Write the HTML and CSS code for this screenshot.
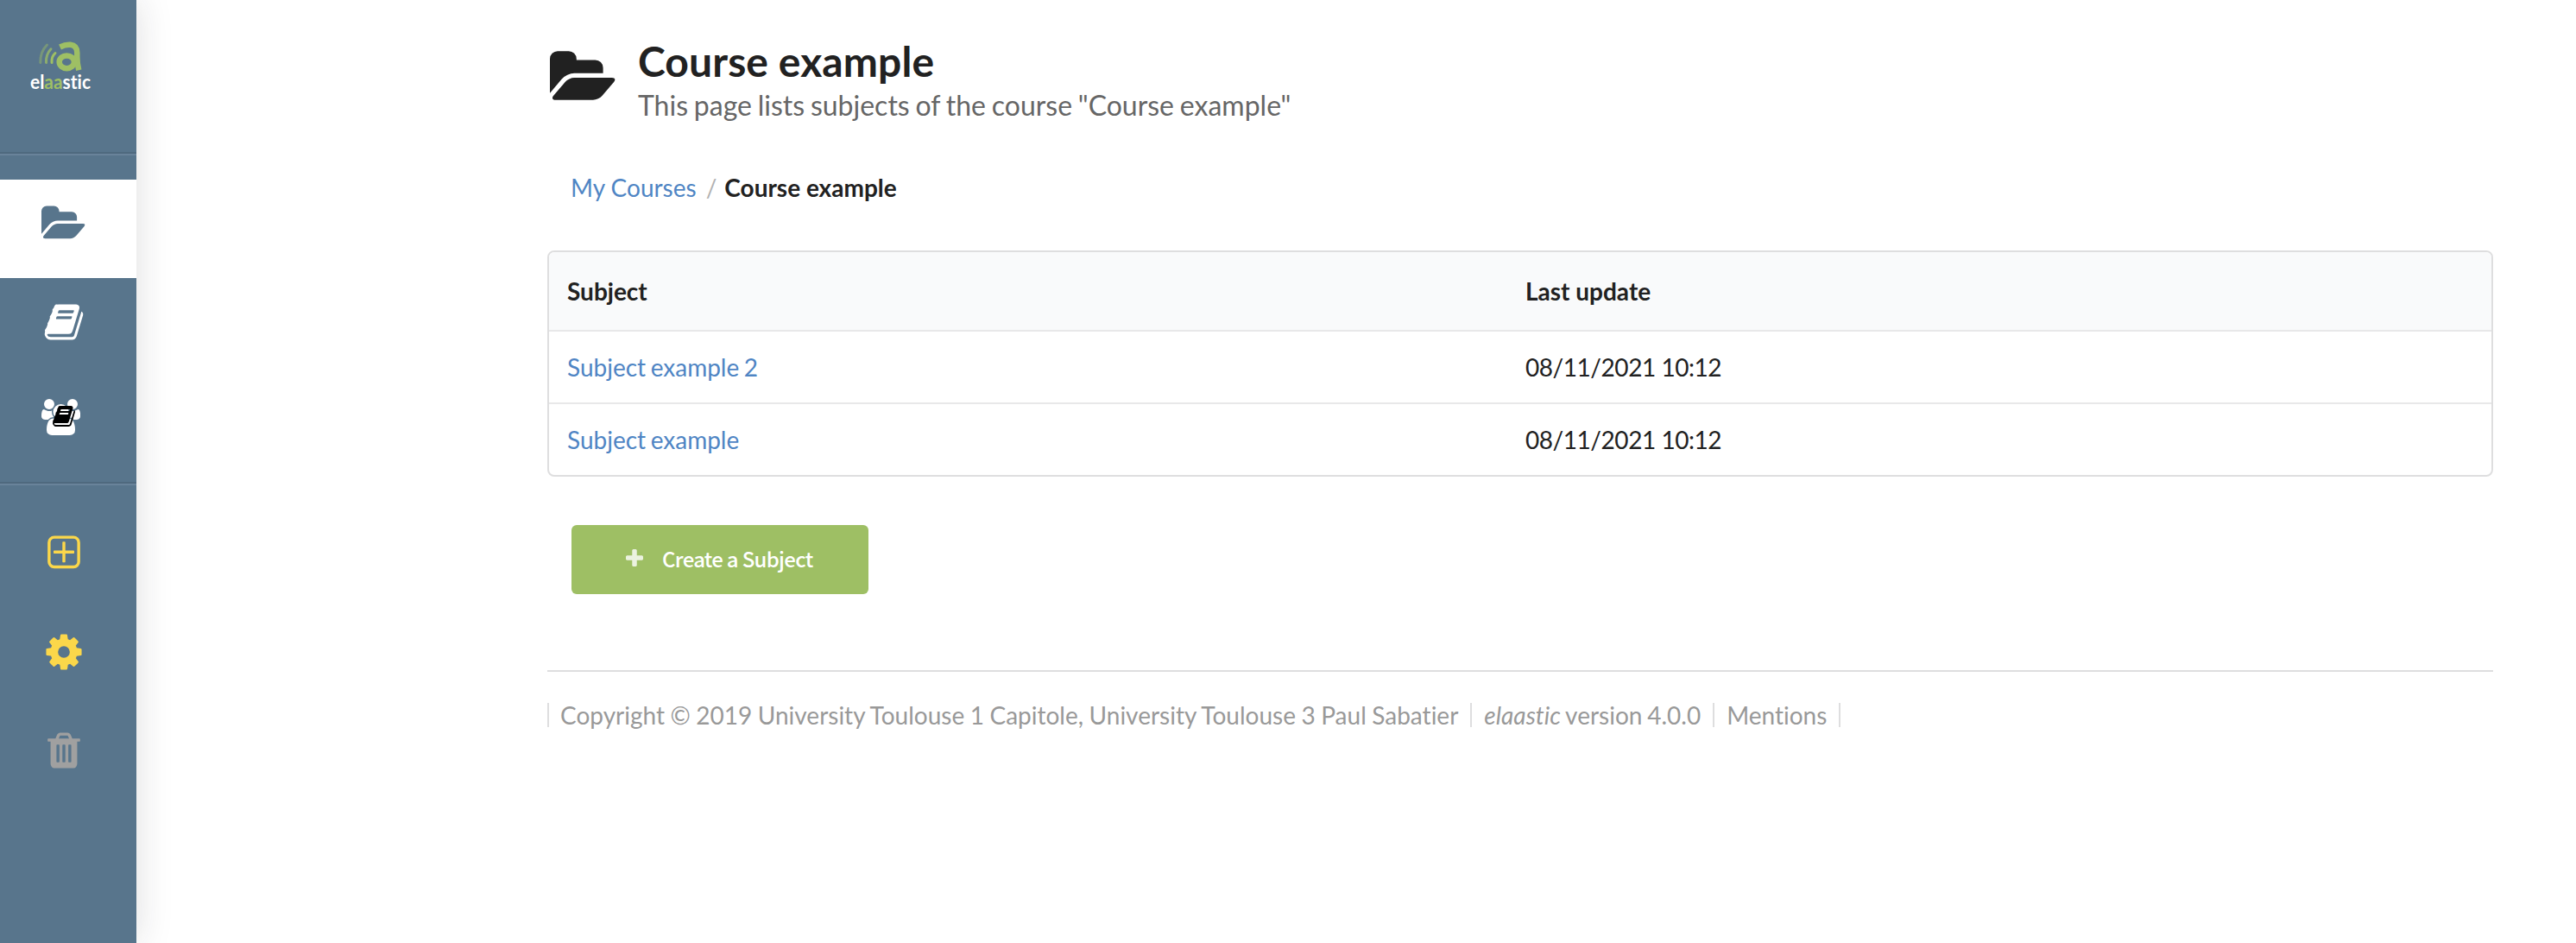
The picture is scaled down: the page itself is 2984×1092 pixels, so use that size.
FILE: index.html
```html
<!DOCTYPE html>
<html lang="en">
<head>
<meta charset="utf-8">
<title>Course example - elaastic</title>
<link rel="stylesheet" href="styles.css">
</head>
<body>
<svg class="symbols" aria-hidden="true">
  <symbol id="folder" viewBox="0 0 1920 1792"><path d="M1879 952q0 31-31 66l-336 396q-43 51-120.500 86.500t-143.500 35.500h-1088q-34 0-60.500-13t-26.500-43q0-31 31-66l336-396q43-51 120.500-86.500t143.500-35.500h1088q34 0 60.500 13t26.500 43zm-343-344v160h-832q-94 0-197 47.500t-164 119.500l-337 396-5 6q0-4-.5-12.500t-.5-12.500v-960q0-92 66-158t158-66h320q92 0 158 66t66 158v32h544q92 0 158 66t66 158z"/></symbol>
  <symbol id="book" viewBox="0 0 1792 1792"><path d="M1703 478q40 57 18 129l-275 906q-19 64-76.500 107.500t-122.500 43.500h-923q-77 0-148.500-53.500t-99.500-131.500q-24-67-2-127 0-4 3-27t4-37q1-8-3-21.500t-3-19.500q2-11 8-21t16.500-23.500 16.500-23.500q23-38 45-91.500t30-91.500q3-10 .5-30t-.5-28q3-11 17-28t17-23q21-36 42-92t25-90q1-9-2.500-32t.5-28q4-13 22-30.500t22-22.500q19-26 42.500-84.500t27.500-96.500q1-8-3-25.500t-2-26.500q2-8 9-18t18-23 17-21q8-12 16.500-30.500t15-35 16-36 19.500-32 26.500-23.500 36-11.500 47.500 5.500l-1 3q38-9 51-9h761q74 0 114 56t18 130l-274 906q-36 119-71.500 153.500t-128.500 34.500h-869q-27 0-38 15-11 16-1 43 24 70 144 70h923q29 0 56-15.500t35-41.500l300-987q7-22 5-57 38 15 59 43zm-1064 2q-4 13 2 22.500t20 9.500h608q13 0 25.500-9.500t16.500-22.500l21-64q4-13-2-22.500t-20-9.500h-608q-13 0-25.500 9.500t-16.500 22.500zm-83 256q-4 13 2 22.500t20 9.500h608q13 0 25.500-9.500t16.500-22.500l21-64q4-13-2-22.500t-20-9.500h-608q-13 0-25.500 9.500t-16.500 22.500z"/></symbol>
  <symbol id="users" viewBox="64 0 1920 1792"><path d="M657 896q-162 5-265 128h-134q-82 0-138-40.500t-56-118.500q0-353 124-353 6 0 43.500 21t97.500 42.500 119 21.500q67 0 133-23-5 37-5 66 0 159 90 256zm1071 637q0 120-73 189.500t-194 69.500h-874q-121 0-194-69.500t-73-189.500q0-53 3.500-103.500t14-109 26.500-108.500 43-97.500 62-81 85.500-53.500 111.500-20q10 0 43 21.500t73 48 107 48 135 21.500 135-21.500 107-48 73-48 43-21.500q61 0 111.500 20t85.500 53.500 62 81 43 97.500 26.500 108.500 14 109 3.500 103.500zm-1024-1277q0 106-75 181t-181 75-181-75-75-181 75-181 181-75 181 75 75 181zm704 384q0 159-112.500 271.500t-271.500 112.500-271.500-112.500-112.500-271.500 112.500-271.500 271.500-112.500 271.500 112.500 112.500 271.500zm576 225q0 78-56 118.500t-138 40.500h-134q-103-123-265-128 90-97 90-256 0-29-5-66 66 23 133 23 59 0 119-21.500t97.500-42.500 43.500-21q124 0 124 353zm-128-609q0 106-75 181t-181 75-181-75-75-181 75-181 181-75 181 75 75 181z"/></symbol>
  <symbol id="add" viewBox="0 0 1792 1792"><path d="M1344 800v64q0 14-9 23t-23 9h-352v352q0 14-9 23t-23 9h-64q-14 0-23-9t-9-23v-352h-352q-14 0-23-9t-9-23v-64q0-14 9-23t23-9h352v-352q0-14 9-23t23-9h64q14 0 23 9t9 23v352h352q14 0 23 9t9 23zm128 448v-832q0-66-47-113t-113-47h-832q-66 0-113 47t-47 113v832q0 66 47 113t113 47h832q66 0 113-47t47-113zm128-832v832q0 119-84.500 203.500t-203.500 84.500h-832q-119 0-203.500-84.500t-84.500-203.500v-832q0-119 84.500-203.500t203.500-84.500h832q119 0 203.500 84.500t84.500 203.500z"/></symbol>
  <symbol id="cog" viewBox="0 0 1792 1792"><path d="M1152 896q0-106-75-181t-181-75-181 75-75 181 75 181 181 75 181-75 75-181zm512-109v222q0 12-8 23t-20 13l-185 28q-19 54-39 91 35 50 107 138 10 12 10 25t-9 23q-27 37-99 108t-94 71q-12 0-26-9l-138-108q-44 23-91 38-16 136-29 186-7 28-36 28h-222q-14 0-24.500-8.500t-11.500-21.500l-28-184q-49-16-90-37l-141 107q-10 9-25 9-14 0-25-11-126-114-165-168-7-10-7-23 0-12 8-23 15-21 51-66.500t54-70.500q-27-50-41-99l-183-27q-13-2-21-12.500t-8-23.500v-222q0-12 8-23t19-13l186-28q14-46 39-92-40-57-107-138-10-12-10-24 0-10 9-23 26-36 98.500-107.500t94.500-71.500q13 0 26 10l138 107q44-23 91-38 16-136 29-186 7-28 36-28h222q14 0 24.500 8.500t11.500 21.500l28 184q49 16 90 37l142-107q9-9 24-9 13 0 25 10 129 119 165 170 7 8 7 22 0 12-8 23-15 21-51 66.500t-54 70.500q26 50 41 98l183 28q13 2 21 12.500t8 23.500z"/></symbol>
  <symbol id="trash" viewBox="0 0 1792 1792"><path d="M704 1376v-704q0-14-9-23t-23-9h-64q-14 0-23 9t-9 23v704q0 14 9 23t23 9h64q14 0 23-9t9-23zm256 0v-704q0-14-9-23t-23-9h-64q-14 0-23 9t-9 23v704q0 14 9 23t23 9h64q14 0 23-9t9-23zm256 0v-704q0-14-9-23t-23-9h-64q-14 0-23 9t-9 23v704q0 14 9 23t23 9h64q14 0 23-9t9-23zm-544-992h448l-48-117q-7-9-17-11h-317q-10 2-17 11zm928 32v64q0 14-9 23t-23 9h-96v948q0 83-47 143.500t-113 60.500h-832q-66 0-113-58.500t-47-141.500v-952h-96q-14 0-23-9t-9-23v-64q0-14 9-23t23-9h309l70-167q15-37 54-63t79-26h320q40 0 79 26t54 63l70 167h309q14 0 23 9t9 23z"/></symbol>
  <symbol id="plus" viewBox="192 128 1408 1408"><path d="M1600 736v192q0 40-28 68t-68 28h-416v416q0 40-28 68t-68 28h-192q-40 0-68-28t-28-68v-416h-416q-40 0-68-28t-28-68v-192q0-40 28-68t68-28h416v-416q0-40 28-68t68-28h192q40 0 68 28t28 68v416h416q40 0 68 28t28 68z"/></symbol>
</svg>
<div class="layout">
  <nav class="sidebar">
    <a class="brand" aria-label="elaastic">
      <svg class="logo" viewBox="30 40 80 70">
        <g fill="none" stroke="#9ebf64" stroke-linecap="round" stroke-width="3">
          <path opacity=".45" d="M54.500 52Q46.500 60 46.800 72.500"/>
          <path opacity=".75" d="M59 56.800Q53 63 53.500 72.500"/>
          <path d="M64 61.500Q59.500 65.500 60 72.500"/>
          <path stroke-width="6.500" d="M69.500 54.500Q76 51.300 81.500 51.800Q89.300 52.800 89.300 61V66Q89.300 73 91.300 81.300" stroke-linecap="butt"/>
          <ellipse stroke-width="6.500" cx="77.300" cy="71.800" rx="8.600" ry="7.400"/>
        </g>
        <text class="logo-text" x="35" y="102.500" textLength="70" lengthAdjust="spacingAndGlyphs">el<tspan class="logo-accent">aa</tspan>stic</text>
      </svg>
    </a>
    <div class="group main-group">
      <a class="item active"><svg class="icon folder-icon"><use href="#folder"/></svg></a>
      <a class="item"><svg class="icon"><use href="#book"/></svg></a>
      <a class="item stacked">
        <svg class="users-icon"><use href="#users"/></svg>
        <svg class="corner-icon"><use href="#book"/></svg>
      </a>
    </div>
    <div class="group tools-group">
      <a class="item yellow"><svg class="icon"><use href="#add"/></svg></a>
      <a class="item yellow"><svg class="icon"><use href="#cog"/></svg></a>
      <a class="item grey"><svg class="icon"><use href="#trash"/></svg></a>
    </div>
  </nav>
  <main class="content">
    <header class="page-header">
      <svg class="header-icon"><use href="#folder"/></svg>
      <div>
        <h1 class="title">Course example</h1>
        <p class="subtitle">This page lists subjects of the course "Course example"</p>
      </div>
    </header>
    <div class="breadcrumb"><a class="link">My Courses</a><span class="divider">/</span><strong>Course example</strong></div>
    <div class="table">
      <div class="row head"><span>Subject</span><span>Last update</span></div>
      <div class="row"><a class="link subject">Subject example 2</a><span class="date">08/11/2021 10:12</span></div>
      <div class="row"><a class="link subject">Subject example</a><span class="date">08/11/2021 10:12</span></div>
    </div>
    <button class="button"><svg class="plus-icon"><use href="#plus"/></svg><span>Create a Subject</span></button>
    <footer class="footer">
      <span class="cell copyright">Copyright © 2019 University Toulouse 1 Capitole, University Toulouse 3 Paul Sabatier</span>
      <span class="cell version"><em>elaastic</em> version 4.0.0</span>
      <span class="cell">Mentions</span>
    </footer>
  </main>
</div>
</body>
</html>
```
FILE: styles.css
```css
* { box-sizing: border-box; }
body {
  margin: 0;
  background: #fff;
  color: #212121;
  font-family: Lato, "Liberation Sans", sans-serif;
  font-size: 28px;
  line-height: 40px;
  font-variant-ligatures: none;
}
.symbols { display: none; }
svg { display: block; fill: currentColor; }
.layout { display: flex; height: 1092px; overflow: hidden; }

.sidebar {
  width: 158px;
  flex: none;
  background: #58758c;
  color: #fff;
  box-shadow: 0 0 40px rgba(34, 36, 38, .15);
}
.brand { display: block; height: 176px; padding: 40px 0 0 30px; }
.logo { width: 80px; height: 70px; }
.logo-text { font: 700 22px Lato, "Open Sans", sans-serif; font-variant-ligatures: none; fill: #fff; }
.logo-accent { fill: #9ebf64; }
.group { border-top: 2px solid #4f697e; box-shadow: inset 0 2px #69839a; }
.main-group { height: 382px; padding-top: 30px; }
.tools-group { padding-top: 22px; }
.item { display: flex; height: 114px; padding: 27px 0 0 50px; }
.active { background: #fff; color: #58758c; }
.icon { width: 48px; height: 48px; }
.folder-icon { width: 51.400px; margin-left: -2px; }
.tools-group .item { padding-top: 35px; }
.yellow { color: #fbd74a; }
.grey { color: #a0a0a0; }
.stacked { position: relative; padding: 26px 0 0 48px; }
.users-icon { width: 45px; height: 42px; }
.corner-icon { position: absolute; left: 60px; top: 32px; width: 28px; height: 28px; color: #000; }

.content { width: 2254px; margin-left: 476px; padding-top: 40px; }
.page-header { display: flex; height: 140px; }
.header-icon { width: 77px; height: 72px; margin: 14px 25px 0 3px; }
.title { margin: 0; font-size: 48px; line-height: 62px; font-weight: 700; letter-spacing: .1px; }
.subtitle { margin: 0; font-size: 32px; line-height: 40px; color: #666; word-spacing: -1.400px; }
.breadcrumb { padding-left: 27px; height: 40px; margin-top: 17px; }
.divider { margin: 0 9px 0 11px; color: #b2b2b2; }
.link { color: #4f85c4; }
.subject { word-spacing: -1.600px; }
.date { letter-spacing: -.450px; }
.table { margin-top: 53px; border: 2px solid #dededf; border-radius: 8px; overflow: hidden; }
.row { display: grid; grid-template-columns: 1110px 1fr; align-items: center; height: 84px; padding-left: 21px; border-top: 2px solid #e8e8e9; }
.head { height: 90px; background: #f9fafb; border-top: 0; font-weight: 700; }
.button {
  display: flex;
  align-items: center;
  width: 344px;
  height: 80px;
  margin: 56px 0 88px 28px;
  padding: 0 0 3px 63px;
  border: 0;
  border-radius: 6px;
  background: #9ebf64;
  color: #fff;
  font: 500 24px "Noto Sans CJK SC", sans-serif;
  letter-spacing: -.700px;
}
.plus-icon { width: 20px; height: 20px; margin: 0 22px 1px 0; opacity: .8; }
.footer { display: flex; border-top: 2px solid #dededf; padding-top: 36px; line-height: 28px; color: #999; }
.cell { padding: 0 14px; border-left: 2px solid #dededf; }
.copyright { padding-left: 13px; word-spacing: -.650px; }
.version { word-spacing: -1.350px; }
.cell:last-child { border-right: 2px solid #dededf; }
```
